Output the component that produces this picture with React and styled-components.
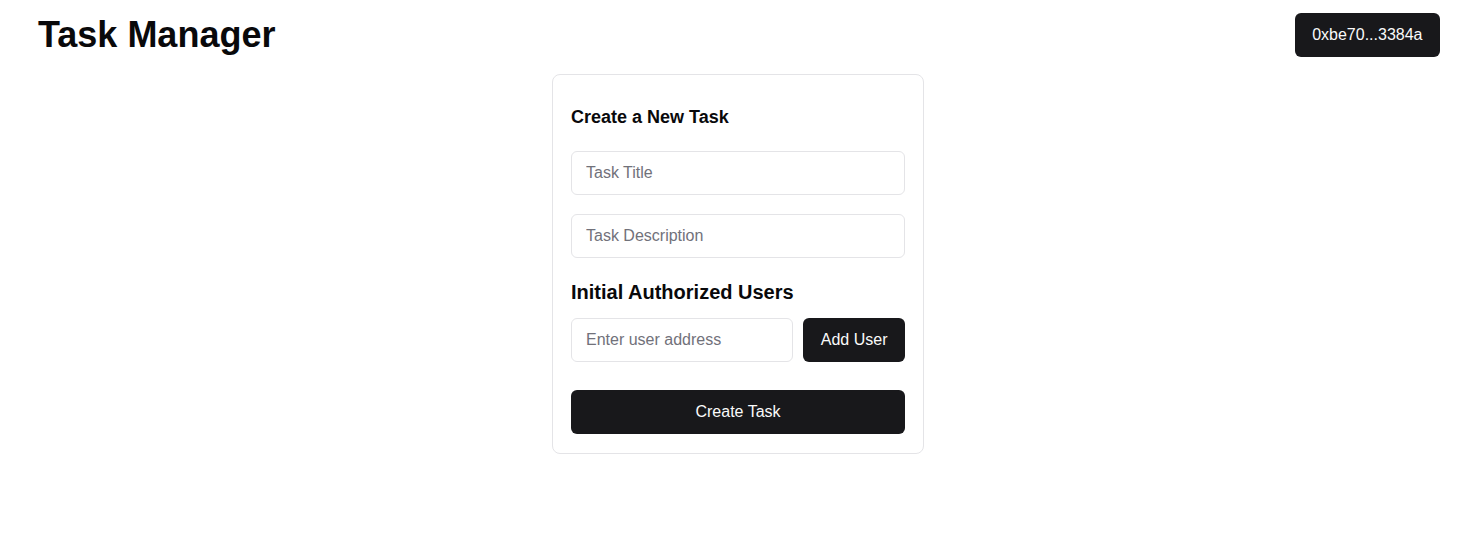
import React, { useState } from 'react';
import styled, { createGlobalStyle } from 'styled-components';

const GlobalStyle = createGlobalStyle`
  body {
    margin: 0;
    background: #ffffff;
    font-family: "Liberation Sans", Arial, sans-serif;
    color: #09090b;
  }
  * {
    box-sizing: border-box;
  }
`;

const Page = styled.div`
  display: flex;
  flex-direction: column;
  min-height: 538px;
`;

const Header = styled.header`
  display: flex;
  justify-content: space-between;
  align-items: center;
  height: 44px;
  margin-top: 13px;
  padding: 0 30px 0 38px;
`;

const Title = styled.h1`
  margin: 0;
  font-size: 36px;
  font-weight: 700;
  line-height: 1;
  color: #09090b;
`;

const DarkButton = styled.button`
  height: 44px;
  padding: 0 ${props => props.$pad || 18}px;
  width: ${props => (props.$full ? '100%' : 'auto')};
  flex-shrink: 0;
  border: none;
  border-radius: 6px;
  background: #18181b;
  color: #fafafa;
  font-family: "Liberation Sans", Arial, sans-serif;
  font-size: 16px;
  cursor: pointer;
`;

const Card = styled.section`
  align-self: center;
  width: 372px;
  margin: 17px 0 0 6px;
  padding: 18px 18px 19px;
  border: 1px solid #e4e4e7;
  border-radius: 8px;
  background: #ffffff;
`;

const CardHeading = styled.h3`
  margin: 14px 0 23px;
  font-size: 18px;
  font-weight: 700;
  line-height: 21px;
`;

const SectionHeading = styled.h2`
  margin: 23px 0 14px;
  font-size: 20px;
  font-weight: 700;
  line-height: 23px;
`;

const Field = styled.input`
  display: block;
  width: 100%;
  min-width: 0;
  height: 44px;
  padding: 0 14px;
  border: 1px solid #e4e4e7;
  border-radius: 6px;
  font-family: "Liberation Sans", Arial, sans-serif;
  font-size: 16px;
  color: #09090b;
  outline: none;

  &::placeholder {
    color: #71717a;
  }

  & + & {
    margin-top: 19px;
  }
`;

const UserRow = styled.div`
  display: flex;
  gap: 10px;
  margin-bottom: 28px;

  ${Field} {
    flex: 1;
    width: auto;
  }
`;

export default function App() {
  const [title, setTitle] = useState('');
  const [description, setDescription] = useState('');
  const [user, setUser] = useState('');

  return (
    <Page>
      <GlobalStyle />
      <Header>
        <Title>Task Manager</Title>
        <DarkButton $pad={17.5}>0xbe70...3384a</DarkButton>
      </Header>

      <Card>
        <CardHeading>Create a New Task</CardHeading>
        <Field
          placeholder="Task Title"
          value={title}
          onChange={e => setTitle(e.target.value)}
        />
        <Field
          placeholder="Task Description"
          value={description}
          onChange={e => setDescription(e.target.value)}
        />

        <SectionHeading>Initial Authorized Users</SectionHeading>
        <UserRow>
          <Field
            placeholder="Enter user address"
            value={user}
            onChange={e => setUser(e.target.value)}
          />
          <DarkButton $pad={17.5}>Add User</DarkButton>
        </UserRow>

        <DarkButton $full>Create Task</DarkButton>
      </Card>
    </Page>
  );
}
